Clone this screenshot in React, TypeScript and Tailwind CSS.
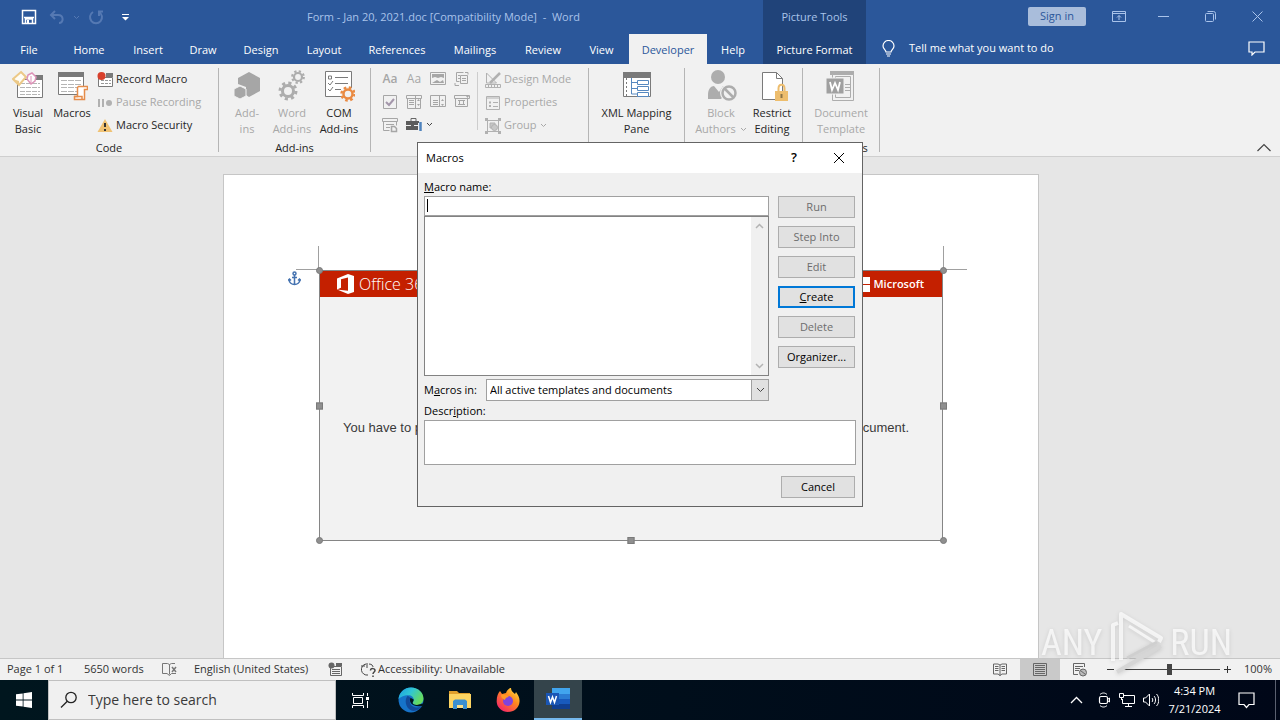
import { useState } from "react";
import type { ReactNode } from "react";

const tabs = [
  { name: "File", width: "w-[58px]" },
  { name: "Home", width: "w-[62px]" },
  { name: "Insert", width: "w-[56px]" },
  { name: "Draw", width: "w-[54px]" },
  { name: "Design", width: "w-[62px]" },
  { name: "Layout", width: "w-[64px]" },
  { name: "References", width: "w-[82px]" },
  { name: "Mailings", width: "w-[74px]" },
  { name: "Review", width: "w-[62px]" },
  { name: "View", width: "w-[55px]" },
  { name: "Developer", width: "w-[78px]" },
  { name: "Help", width: "w-[52px]" },
];

type IconProps = { children: ReactNode; size?: number; color?: string; className?: string };

const Icon = ({ children, size = 16, color = "currentColor", className = "" }: IconProps) => (
  <svg
    width={size}
    height={size}
    viewBox={`0 0 ${size} ${size}`}
    fill="none"
    stroke={color}
    className={`shrink-0 ${className}`}
    aria-hidden="true"
  >
    {children}
  </svg>
);

const Chevron = ({ className = "" }: { className?: string }) => (
  <svg width="7" height="5" viewBox="0 0 7 5" fill="none" stroke="currentColor" className={`inline-block ${className}`} aria-hidden="true">
    <path d="M1 1l2.500 2.500L6 1" />
  </svg>
);

/* ---------- ribbon icons ---------- */

const VisualBasicIcon = () => (
  <Icon size={32}>
    <path d="M5.500 9.500h25v18h-25z" fill="#fff" stroke="#7a7a7a" />
    <path d="M23 5h8v5h-8z" fill="#7a7a7a" stroke="none" />
    <path d="M8 13.500h20M8 17.500h20M8 21.500h20M8 24.500h20" stroke="#b5b5b5" strokeDasharray="5 1" />
    <path d="M9 2l5 5-7 8-6-6z" fill="#fffdf5" stroke="#ecc987" strokeWidth="2" />
    <path d="M1 9l6 2v4z" fill="#ecc987" stroke="none" />
    <path d="M16 5l4-2 4 4-1 4-4 3-4-5z" fill="#fff" stroke="#dd93b8" strokeWidth="1.500" />
    <path d="M19 6v7" stroke="#dd93b8" />
  </Icon>
);

const MacrosIcon = () => (
  <Icon size={32}>
    <path d="M2.500 3.500h25v21h-25z" fill="#fff" stroke="#7a7a7a" />
    <path d="M2 2h26v5H2z" fill="#7a7a7a" stroke="none" />
    <path d="M5 10.500h20M5 14.500h20M5 17.500h20M5 21.500h20" stroke="#b5b5b5" strokeDasharray="6 1" />
    <path d="M22.500 16.500h9v3h-3v10h-10v-3h3v-9z" fill="#fff" stroke="#e58c4a" strokeWidth="1.500" />
    <path d="M18 26.500h8v3" stroke="#e58c4a" strokeWidth="1.500" />
  </Icon>
);

const AddInsIcon = () => (
  <Icon size={32}>
    <path d="M18 2l11 6v13l-11 6-3-2v-8l-8-3V8z" fill="#a6a6a6" stroke="none" />
    <path d="M9 16l6 3v7l-6 3-6-3v-7z" fill="#a6a6a6" stroke="#f1f1f1" />
  </Icon>
);

const Gear = ({ cx, cy, r, color }: { cx: number; cy: number; r: number; color: string }) => (
  <g stroke={color} strokeWidth={r * 0.55}>
    <circle cx={cx} cy={cy} r={r} />
    <circle
      cx={cx}
      cy={cy}
      r={r * 1.45}
      strokeDasharray={`${r * 0.57} ${r * 0.57}`}
    />
  </g>
);

const WordAddInsIcon = () => (
  <Icon size={32}>
    <Gear cx={12} cy={21} r={5.500} color="#adadad" />
    <Gear cx={22} cy={7} r={4} color="#adadad" />
  </Icon>
);

const ComAddInsIcon = () => (
  <Icon size={32}>
    <path d="M2.500 1.500h26v25h-26z" fill="#fff" stroke="#7a7a7a" />
    <path d="M12 7.500h13M12 13.500h13M12 19.500h6" stroke="#7a7a7a" />
    <path d="M5.500 6h3v3h-3zM5 13l2 2 3-4M5 19l2 2 3-4" stroke="#7a7a7a" />
    <circle cx="25" cy="24" r="7" fill="#f1f1f1" stroke="none" />
    <Gear cx={25} cy={24} r={4.500} color="#ea8a42" />
  </Icon>
);

const XmlIcon = () => (
  <Icon size={32}>
    <path d="M2.500 3.500h27v23h-27z" fill="#fff" stroke="#7a7a7a" />
    <path d="M2 2h28v6H2z" fill="#7a7a7a" stroke="none" />
    <path d="M5.500 8v18" stroke="#7a7a7a" strokeDasharray="2 2" />
    <path d="M10.500 8v16h6M10.500 12.500h6M10.500 18.500h6" stroke="#5688bf" />
    <path d="M16.500 10.500h11v4h-11zM16.500 16.500h11v4h-11zM16.500 22.500h11v4h-11z" fill="#fff" stroke="#5688bf" />
  </Icon>
);

const BlockAuthorsIcon = () => (
  <Icon size={32}>
    <circle cx="13" cy="7" r="7" fill="#adadad" stroke="none" />
    <path d="M3 29v-4c0-6 3-9 6-9l5 6 4-6c3 0 5 2 6 4l-8 9z" fill="#adadad" stroke="none" />
    <circle cx="24" cy="23" r="9" fill="#f1f1f1" stroke="none" />
    <circle cx="24" cy="23" r="6.500" stroke="#adadad" strokeWidth="2.500" fill="#f1f1f1" />
    <path d="M19.500 18.500l9 9" stroke="#adadad" strokeWidth="2.500" />
  </Icon>
);

const RestrictIcon = () => (
  <Icon size={32}>
    <path d="M6.500 2.500h14l6 6v21h-20z" fill="#fff" stroke="#7a7a7a" />
    <path d="M20.500 2.500v6h6" stroke="#7a7a7a" />
    <path d="M22.500 22v-3.500c0-5 6-5 6 0V22" stroke="#edbd6d" strokeWidth="2" />
    <path d="M19 21h13v10H19z" fill="#edbd6d" stroke="none" />
    <path d="M25.500 24v4" stroke="#8a7347" strokeWidth="2" />
  </Icon>
);

const TemplateIcon = () => (
  <Icon size={32}>
    <path d="M5 1h24v4H5z" fill="#adadad" stroke="none" />
    <path d="M7.500 4.500h21v26h-21z" fill="#f1f1f1" stroke="#adadad" />
    <path d="M10.500 6.500h15v21h-15z" stroke="#adadad" />
    <path d="M20 14.500h5M20 17.500h5M20 20.500h5" stroke="#adadad" />
    <path d="M1 8h18v16H1z" fill="#a0a0a0" stroke="#f1f1f1" />
    <path d="M5 12l2 8 3-7 3 7 2-8" stroke="#fff" strokeWidth="1.800" />
  </Icon>
);

const RecordIcon = () => (
  <Icon>
    <path d="M1.500 5.500h14v9h-14z" fill="#fff" stroke="#7a7a7a" />
    <path d="M9 1h7v4H9z" fill="#7a7a7a" stroke="none" />
    <path d="M4 8.500h10M4 11.500h10" stroke="#999" strokeDasharray="3 1" />
    <circle cx="4.500" cy="4" r="4" fill="#d8402c" stroke="none" />
  </Icon>
);

const PauseIcon = () => (
  <Icon>
    <path d="M2 4v8M6 4v8" stroke="#b1b1b1" strokeWidth="2" />
    <circle cx="12" cy="8" r="3" fill="#b1b1b1" stroke="none" />
  </Icon>
);

const WarningIcon = () => (
  <Icon>
    <path d="M8 1l7.500 13H.5z" fill="#f0c274" stroke="none" />
    <path d="M8 5v4M8 11v2" stroke="#333" strokeWidth="2" />
  </Icon>
);

const DesignModeIcon = () => (
  <Icon color="#b1b1b1">
    <path d="M1.500 1v10h10z" />
    <path d="M5 11L15 1" strokeWidth="2.500" />
    <path d="M.5 12.500h15v3H.5zM3.500 13v2M6.500 13v2M9.500 13v2M12.500 13v2" />
  </Icon>
);

const PropertiesIcon = () => (
  <Icon color="#b1b1b1">
    <path d="M1.500 1.500h13v13h-13zM1 3h14" />
    <path d="M4 7.500h2M4 11h2" strokeWidth="2" />
    <path d="M8 7.500h5M8 11.500h5" />
  </Icon>
);

const GroupIcon = () => (
  <Icon color="#b1b1b1">
    <path d="M2.500 2.500h11v11h-11z" />
    <path d="M5 5h5v5H5z" fill="#c8c8c8" />
    <circle cx="9.500" cy="9.500" r="3" fill="#c8c8c8" />
    <path d="M0 1.500h3M13 1.500h3M0 14.500h3M13 14.500h3" strokeWidth="3" />
  </Icon>
);

const PictureControl = () => (
  <Icon>
    <path d="M.5 1.500h15v12H.5z" />
    <path d="M2 3h12v4l-3-1-3 1-3-1-3 1zM2 12l5-3 3 2 3-2 1 3z" fill="currentColor" stroke="none" />
  </Icon>
);

const BuildingBlockControl = () => (
  <Icon>
    <path d="M2.500 1.500h7M2.500 1.500v9h3M4 4.500h2M4 7.500h2M6.500 4.500h7v8h-7zM8 7.500h4M8 9.500h4M11 1.500h3v2M1 12v2.500h4" />
  </Icon>
);

const CheckControl = () => (
  <Icon>
    <path d="M1.500 1.500h13v13h-13z" />
    <path d="M4 8l3 3 5-6" stroke="#a497ab" strokeWidth="2" />
  </Icon>
);

const ComboControl = ({ plain = false }: { plain?: boolean }) => (
  <Icon>
    <path d={plain ? "M.5 1.500h15v11H.5zM9.500 1v12" : "M.5 1.500h15v3H.5zM1.500 4.500h13v10h-13zM9.500 1v14"} />
    <path d="M3 6.500h5M3 8.500h5M3 10.500h5" />
    <path d="M11 7l1.500-2L14 7zM11 10l1.500 2 1.500-2z" fill="currentColor" stroke="none" />
  </Icon>
);

const DateControl = () => (
  <Icon>
    <path d="M.5 1.500h15v3H.5zM1.500 4.500h12v8h-12zM4 6.500h7M4 10.500h7M5.500 6v5M9.500 6v5" />
    <path d="M12 2l1.500 2L15 2z" fill="currentColor" stroke="none" />
  </Icon>
);

const RepeatControl = () => (
  <Icon>
    <path d="M.5 1.500h15v3H.5zM1.500 4.500v9h6M14.500 4.500v4M4 7.500h8M4 10.500h4" />
    <path d="M9.500 9.500h3l2 2v3h-5z" fill="#f1f1f1" strokeWidth="1.500" />
  </Icon>
);

const ToolboxIcon = () => (
  <Icon>
    <path d="M5 4V1.500h5V4" stroke="#666" />
    <path d="M0 4h13v9H0z" fill="#5c5c5c" stroke="none" />
    <path d="M0 8.500h5M8 8.500h4" stroke="#f1f1f1" />
    <path d="M14.500 5v9" stroke="#4f83bd" strokeWidth="2.500" />
    <path d="M12.500 6v8" stroke="#f1f1f1" />
  </Icon>
);

/* ---------- ribbon pieces ---------- */

type BigButtonProps = { icon: ReactNode; lines: string[]; width: string; disabled?: boolean; menu?: boolean };

const BigButton = ({ icon, lines, width, disabled = false, menu = false }: BigButtonProps) => (
  <button
    disabled={disabled}
    className={`flex shrink-0 flex-col items-center pt-1.5 whitespace-nowrap ${width} ${disabled ? "text-[#a8a8a8]" : "text-[#262626]"}`}
  >
    {icon}
    <span className="mt-[3px] h-8 leading-4">
      {lines.map((line, i) => (
        <span key={line} className="block">
          {line}
          {menu && i === lines.length - 1 && <Chevron className="mb-0.5 ml-1" />}
        </span>
      ))}
    </span>
  </button>
);

const SmallButton = ({ icon, text, disabled = false, menu = false }: { icon: ReactNode; text: string; disabled?: boolean; menu?: boolean }) => (
  <button
    disabled={disabled}
    className={`flex h-[23px] items-center gap-[3px] whitespace-nowrap ${disabled ? "text-[#a8a8a8]" : "text-[#262626]"}`}
  >
    {icon}
    {text}
    {menu && <Chevron />}
  </button>
);

const RibbonGroup = ({ label, width, children }: { label?: string; width: string; children: ReactNode }) => (
  <section className={`flex shrink-0 ${width}`}>
    <div className="flex min-w-0 flex-1 flex-col">
      <div className="flex h-[76px]">{children}</div>
      <div className="h-4 text-center leading-4">{label}</div>
    </div>
    <div className="my-1 w-px bg-[#b5b5b5]" />
  </section>
);

const Ribbon = () => (
  <div className="flex h-[93px] shrink-0 border-b border-[#cfcfcf] bg-[#f1f1f1] text-[#262626]">
    <RibbonGroup label="Code" width="w-[219px]">
      <div className="flex pl-1.5">
        <BigButton icon={<VisualBasicIcon />} lines={["Visual", "Basic"]} width="w-11" />
        <BigButton icon={<MacrosIcon />} lines={["Macros"]} width="w-11" />
        <div className="flex flex-col pt-1 pl-[3px]">
          <SmallButton icon={<RecordIcon />} text="Record Macro" />
          <SmallButton icon={<PauseIcon />} text="Pause Recording" disabled />
          <SmallButton icon={<WarningIcon />} text="Macro Security" />
        </div>
      </div>
    </RibbonGroup>
    <RibbonGroup label="Add-ins" width="w-[152px]">
      <div className="flex pl-[7px]">
        <BigButton icon={<AddInsIcon />} lines={["Add-", "ins"]} width="w-[42px]" disabled />
        <BigButton icon={<WordAddInsIcon />} lines={["Word", "Add-ins"]} width="w-12" disabled />
        <BigButton icon={<ComAddInsIcon />} lines={["COM", "Add-ins"]} width="w-[46px]" />
      </div>
    </RibbonGroup>
    <RibbonGroup width="w-[218px]">
      <div className="grid w-[103px] grid-cols-[24px_24px_24px_24px] grid-rows-[23px_23px_23px] pt-[3px] pl-[7px] text-[#a6a6a6]">
        <button className="text-xs font-semibold">Aa</button>
        <button className="text-xs">Aa</button>
        <button className="flex items-center justify-center" aria-label="Picture control"><PictureControl /></button>
        <button className="flex items-center justify-center" aria-label="Building block"><BuildingBlockControl /></button>
        <button className="flex items-center justify-center" aria-label="Check box"><CheckControl /></button>
        <button className="flex items-center justify-center" aria-label="Combo box"><ComboControl /></button>
        <button className="flex items-center justify-center" aria-label="Drop-down list"><ComboControl plain /></button>
        <button className="flex items-center justify-center" aria-label="Date picker"><DateControl /></button>
        <button className="flex items-center justify-center" aria-label="Repeating section"><RepeatControl /></button>
        <button className="col-span-2 flex items-center gap-1 pl-1 text-[#444]" aria-label="Legacy tools">
          <ToolboxIcon />
          <Chevron />
        </button>
      </div>
      <div className="mt-2 ml-[3px] h-[58px] w-px bg-[#cdcdcd]" />
      <div className="flex flex-col pt-1 pl-[7px]">
        <SmallButton icon={<DesignModeIcon />} text="Design Mode" disabled />
        <SmallButton icon={<PropertiesIcon />} text="Properties" disabled />
        <SmallButton icon={<GroupIcon />} text="Group" disabled menu />
      </div>
    </RibbonGroup>
    <RibbonGroup width="w-24">
      <BigButton icon={<XmlIcon />} lines={["XML Mapping", "Pane"]} width="w-full" />
    </RibbonGroup>
    <RibbonGroup width="w-[118px]">
      <div className="flex pl-[9px]">
        <BigButton icon={<BlockAuthorsIcon />} lines={["Block", "Authors"]} width="w-[54px]" disabled menu />
        <BigButton icon={<RestrictIcon />} lines={["Restrict", "Editing"]} width="w-12" />
      </div>
    </RibbonGroup>
    <RibbonGroup label="Templates" width="w-[77px]">
      <BigButton icon={<TemplateIcon />} lines={["Document", "Template"]} width="w-full" disabled />
    </RibbonGroup>
    <button className="mt-auto mr-2 mb-1 ml-auto" aria-label="Collapse the ribbon">
      <svg width="16" height="9" viewBox="0 0 16 9" fill="none" stroke="#444" strokeWidth="1.200">
        <path d="M1.500 8L8 1.500 14.500 8" />
      </svg>
    </button>
  </div>
);

/* ---------- window header ---------- */

const TitleBar = () => (
  <header className="flex h-16 shrink-0 bg-[#2b579a] text-white">
    <div className="flex w-[763px] shrink-0 flex-col">
      <div className="flex h-[34px] items-center">
        <div className="flex w-[307px] items-center pl-[21px]">
          <button aria-label="Save">
            <Icon>
              <path d="M1.500 1.500h13v13h-13z" strokeWidth="1.500" />
              <path d="M3 8.500h10M4.500 14v-4h7v4" strokeWidth="1.500" />
              <path d="M6 11h2v3H6z" fill="#fff" stroke="none" />
            </Icon>
          </button>
          <button className="ml-3 flex items-center gap-2 text-[#5579b3]" aria-label="Undo">
            <Icon>
              <path d="M6 2L2 6l4 4M2 6h7c6 0 6 8 1 8" strokeWidth="2" />
            </Icon>
            <Chevron />
          </button>
          <button className="ml-2 text-[#5579b3]" aria-label="Repeat">
            <Icon>
              <path d="M11 3a6 6 0 1 1-6 0M11 7V2.500h4" strokeWidth="2" />
            </Icon>
          </button>
          <button className="ml-[18px]" aria-label="Customize toolbar">
            <svg width="7" height="7" viewBox="0 0 7 7" fill="#fff"><path d="M0 0h7v1H0zM0 3h7L3.500 6.500z" /></svg>
          </button>
        </div>
        <h1 className="whitespace-pre text-[#a9c3ea]">Form - Jan 20, 2021.doc [Compatibility Mode]  -  Word</h1>
      </div>
      <nav className="flex h-[30px]">
        {tabs.map((tab) => (
          <button
            key={tab.name}
            className={`shrink-0 pt-0.5 ${tab.width} ${tab.name === "Developer" ? "bg-[#f1f1f1] text-[#2b579a]" : ""}`}
          >
            {tab.name}
          </button>
        ))}
      </nav>
    </div>
    <div className="flex w-[103px] shrink-0 flex-col bg-[#204379]">
      <div className="flex h-[34px] items-center justify-center text-[#a9c3ea]">Picture Tools</div>
      <button className="h-[30px] pt-0.5">Picture Format</button>
    </div>
    <div className="flex min-w-0 flex-1 flex-col">
      <div className="flex h-8 items-center justify-end pr-[17px] text-[#a9c3ea]">
        <button className="mr-[26px] h-[19px] w-[58px] rounded-xs bg-[#a9bddb] text-[#2b579a]">Sign in</button>
        <button className="mr-8" aria-label="Ribbon display options">
          <svg width="14" height="11" viewBox="0 0 14 11" fill="none" stroke="currentColor">
            <path d="M.5.5h13v10H.5zM1 2.500h12M7 9V4.500M5 6.500l2-2 2 2" />
          </svg>
        </button>
        <button className="mr-9" aria-label="Minimize">
          <svg width="11" height="11" viewBox="0 0 11 11" fill="none" stroke="currentColor"><path d="M0 5.500h11" /></svg>
        </button>
        <button className="mr-9" aria-label="Restore">
          <svg width="11" height="11" viewBox="0 0 11 11" fill="none" stroke="currentColor">
            <rect x=".5" y="2.500" width="8" height="8" rx="1" />
            <path d="M2.500.5h6a2 2 0 0 1 2 2v6" />
          </svg>
        </button>
        <button aria-label="Close">
          <svg width="11" height="11" viewBox="0 0 11 11" fill="none" stroke="currentColor"><path d="M.5.5l10 10M10.500.5l-10 10" /></svg>
        </button>
      </div>
      <div className="flex h-8 items-center pr-[15px] pl-4">
        <button className="flex items-center gap-3.5">
          <svg width="13" height="17" viewBox="0 0 13 17" fill="none" stroke="#fff" strokeWidth="1.200">
            <path d="M4 12c0-2-3-3-3-6a5.500 5.500 0 0 1 11 0c0 3-3 4-3 6zM4 14h5M5 16h3" />
          </svg>
          Tell me what you want to do
        </button>
        <button className="ml-auto" aria-label="Comments">
          <svg width="17" height="15" viewBox="0 0 17 15" fill="none" stroke="#fff" strokeWidth="1.200">
            <path d="M1 1h15v10H7l-3 3v-3H1z" />
          </svg>
        </button>
      </div>
    </div>
  </header>
);

/* ---------- document ---------- */

const handles = [
  "-left-1 -top-1 rounded-full",
  "-right-[5px] -top-1 rounded-full",
  "-left-1 top-1/2 -translate-y-1/2",
  "-right-[5px] top-1/2 -translate-y-1/2",
  "-bottom-1 -left-1 rounded-full",
  "-bottom-1 left-1/2 -translate-x-1/2",
  "-bottom-1 -right-[5px] rounded-full",
];

const DocumentArea = () => (
  <main className="flex min-h-0 flex-1 justify-center overflow-hidden bg-[#e6e6e6] pt-[17px] pr-[18px]">
    <div className="w-[816px] shrink-0 border border-b-0 border-[#c6c6c6] bg-white px-[95px] pt-[95px]">
      <div className="relative flex h-[271px] flex-col border border-[#858585] bg-[#f2f2f2]">
        <svg width="13" height="15" viewBox="0 0 13 15" fill="none" stroke="#4472b0" strokeWidth="1.500" className="absolute top-0 -left-8">
          <circle cx="6.500" cy="2.500" r="1.500" />
          <path d="M6.500 4v10M4 6.500h5M1 8c0 4 3 5.500 5.500 5.500S12 12 12 8M0 9.500L1.500 8 3 9.500M10 9.500L11.500 8 13 9.500" />
        </svg>
        <div className="absolute -top-[25px] -left-0.5 h-6 w-px bg-[#a0a0a0]" />
        <div className="absolute -top-0.5 -left-6 h-px w-6 bg-[#a0a0a0]" />
        <div className="absolute -top-[25px] -right-0.5 h-6 w-px bg-[#a0a0a0]" />
        <div className="absolute -top-0.5 -right-[25px] h-px w-6 bg-[#a0a0a0]" />
        <div className="flex h-[26px] items-center justify-between bg-[#c42000] pr-[18px] pl-[17px] text-white">
          <div className="flex items-center gap-1">
            <svg width="18" height="20" viewBox="0 0 18 20" fill="#fff" aria-hidden="true">
              <path d="M0 4.500L11 0l6 2v16l-6 2L0 15.500l11 1.300V3.500L4 5.200v8.600L0 15.500z" />
            </svg>
            <span className="text-base font-light">Office 365</span>
          </div>
          <div className="flex items-center gap-[3px]">
            <svg width="15" height="15" viewBox="0 0 15 15" fill="#fff" aria-hidden="true">
              <path d="M0 0h7v7H0zM8 0h7v7H8zM0 8h7v7H0zM8 8h7v7H8z" />
            </svg>
            <span className="font-semibold">Microsoft</span>
          </div>
        </div>
        <div className="mt-[122px] flex justify-between pr-[33px] pl-[23px] font-['Liberation_Sans',sans-serif] text-[13px] leading-[18px] text-[#3a3a3a]">
          <span>You have to p</span>
          <span>cument.</span>
        </div>
        {handles.map((place) => (
          <span key={place} className={`absolute size-[7px] border border-[#7a7a7a] bg-[#8f8f8f] ${place}`} />
        ))}
      </div>
    </div>
  </main>
);

/* ---------- macros dialog ---------- */

const DialogButton = ({ children, disabled = false, primary = false, width = "w-[77px]" }: { children: ReactNode; disabled?: boolean; primary?: boolean; width?: string }) => (
  <button
    disabled={disabled}
    className={`h-[22px] ${width} bg-[#e1e1e1] ${primary ? "border-2 border-[#0078d7]" : "border border-[#adadad]"} ${disabled ? "text-[#6d6d6d]" : "text-black"}`}
  >
    {children}
  </button>
);

const MacrosDialog = () => {
  const [macroName, setMacroName] = useState("");

  return (
    <div role="dialog" aria-label="Macros" className="absolute inset-x-0 top-[142px] mx-auto w-[446px] border border-[#646464] bg-[#f0f0f0] text-black">
      <div className="flex h-[30px] items-center bg-white pr-[17px] pl-2">
        <span>Macros</span>
        <button className="ml-auto text-[13px] font-semibold" aria-label="Help">?</button>
        <button className="ml-9" aria-label="Close dialog">
          <svg width="12" height="12" viewBox="0 0 12 12" fill="none" stroke="#000"><path d="M1 1l10 10M11 1L1 11" /></svg>
        </button>
      </div>
      <div className="px-1.5 pt-1.5 pb-2">
        <div className="flex justify-between pr-px">
          <div className="w-[345px]">
            <label htmlFor="macro-name" className="block h-[17px] leading-4">
              <span className="underline">M</span>acro name:
            </label>
            <div className="relative">
              <input
                id="macro-name"
                value={macroName}
                onChange={(e) => setMacroName(e.target.value)}
                className="block h-5 w-full border border-[#a0a0a0] bg-white px-1 outline-none"
              />
              {macroName === "" && <span className="absolute top-[3px] left-[3px] h-[13px] w-px bg-black" />}
            </div>
            <div className="flex h-40 justify-end border border-[#828282] bg-white" role="listbox" aria-label="Macro list">
              <div className="flex w-[17px] flex-col items-center justify-between bg-[#f0f0f0] py-1.5 text-[#b3b3b3]">
                <svg width="9" height="6" viewBox="0 0 9 6" fill="none" stroke="currentColor" strokeWidth="1.500"><path d="M1 5l3.500-3.500L8 5" /></svg>
                <svg width="9" height="6" viewBox="0 0 9 6" fill="none" stroke="currentColor" strokeWidth="1.500"><path d="M1 1l3.500 3.500L8 1" /></svg>
              </div>
            </div>
          </div>
          <div className="flex flex-col gap-2 pt-[17px]">
            <DialogButton disabled>Run</DialogButton>
            <DialogButton disabled>Step Into</DialogButton>
            <DialogButton disabled>Edit</DialogButton>
            <DialogButton primary><span className="underline">C</span>reate</DialogButton>
            <DialogButton disabled>Delete</DialogButton>
            <DialogButton>Or<span className="underline">g</span>anizer...</DialogButton>
          </div>
        </div>
        <div className="mt-[3px] flex w-[345px] items-center">
          <label htmlFor="macros-in" className="w-[62px] shrink-0">M<span className="underline">a</span>cros in:</label>
          <div className="relative flex-1">
            <select id="macros-in" className="block h-[22px] w-full appearance-none border border-[#a0a0a0] bg-white pl-[3px] outline-none">
              <option>All active templates and documents</option>
            </select>
            <span className="pointer-events-none absolute inset-y-0 right-0 flex w-[18px] items-center justify-center border border-[#a0a0a0] bg-[#e1e1e1]">
              <svg width="9" height="6" viewBox="0 0 9 6" fill="none" stroke="#444"><path d="M1 1l3.500 3.500L8 1" /></svg>
            </span>
          </div>
        </div>
        <label htmlFor="description" className="mt-0.5 block h-[17px] leading-4">Descr<span className="underline">i</span>ption:</label>
        <textarea id="description" className="block h-[45px] w-full resize-none border border-[#a0a0a0] bg-white px-1 outline-none" />
        <div className="mt-[11px] flex justify-end pr-px">
          <DialogButton width="w-[74px]">Cancel</DialogButton>
        </div>
      </div>
    </div>
  );
};

/* ---------- bottom bars ---------- */

const StatusBar = () => (
  <footer className="flex h-[22px] shrink-0 items-center border-t border-[#c6c6c6] bg-[#f1f1f1] pr-2 pl-[7px] whitespace-nowrap text-[#333]">
    <span className="w-[77px]">Page 1 of 1</span>
    <span className="w-[78px]">5650 words</span>
    <span className="w-8">
      <Icon color="#777">
        <path d="M7.500 2.500v10M7.500 2.500L5.500 1.500h-5v10H5l2.500 2 2-2H14M7.500 2.500l2-1H13" />
        <path d="M10 5l4 5M14 5l-4 5" strokeWidth="1.500" />
      </Icon>
    </span>
    <span className="w-[134px]">English (United States)</span>
    <span className="w-8">
      <Icon color="#666">
        <path d="M2.500 4.500h11v9h-11zM4 7.500h8M4 9.500h8M4 11.500h8" />
        <path d="M8 1h6v3H8z" fill="#666" stroke="none" />
        <circle cx="3.500" cy="3.500" r="3" fill="#666" stroke="none" />
      </Icon>
    </span>
    <span className="flex items-center gap-0.5">
      <Icon color="#444">
        <path d="M6 2a5.500 5.500 0 0 0 2 11M1 4h4M7 1v5M9 2c3 0 4 2 4 3" />
        <path d="M10.500 8.500c0-3 4.500-2 4.500 0 0 1.500-2 1.500-2 3.500M13 13.500V15" strokeWidth="1.500" />
      </Icon>
      Accessibility: Unavailable
    </span>
    <div className="ml-auto flex h-full items-center">
      <button className="flex h-full w-10 items-center justify-center" aria-label="Read mode">
        <Icon color="#666">
          <path d="M8 3v11M8 3L6 2H1.500v10H6l2 1.500 2-1.500h4.500V2H10zM3 4.500h3.500M3 6.500h3.500M3 8.500h3.500M9.500 4.500H13M9.500 6.500H13M9.500 8.500H13" />
        </Icon>
      </button>
      <button className="flex h-full w-10 items-center justify-center bg-[#c9c9c9]" aria-label="Print layout">
        <Icon color="#666">
          <path d="M1.500 1.500h13v12h-13zM3 3.500h10M3 5.500h10M3 7.500h10M3 9.500h10M3 11.500h10" />
        </Icon>
      </button>
      <button className="flex h-full w-10 items-center justify-center" aria-label="Web layout">
        <Icon color="#666">
          <path d="M6 12.500H1.500v-11h11V5M3 4.500h8M3 6.500h5M3 8.500h4" />
          <circle cx="11" cy="10.500" r="3.500" fill="#bbb" />
          <path d="M8.500 8.500l5 4" />
        </Icon>
      </button>
      <button className="ml-1.5 w-2.5" aria-label="Zoom out">
        <svg width="9" height="9" viewBox="0 0 9 9" stroke="#333"><path d="M1 4.500h7" /></svg>
      </button>
      <input
        type="range"
        aria-label="Zoom"
        min={0}
        max={100}
        defaultValue={50}
        className="mx-[3px] h-[11px] w-[101px] appearance-none bg-[linear-gradient(#444,#444)] bg-[length:100%_1px] bg-center bg-no-repeat [&::-webkit-slider-thumb]:h-[11px] [&::-webkit-slider-thumb]:w-[5px] [&::-webkit-slider-thumb]:appearance-none [&::-webkit-slider-thumb]:bg-[#444]"
      />
      <button aria-label="Zoom in">
        <svg width="9" height="9" viewBox="0 0 9 9" stroke="#333"><path d="M1 4.500h7M4.500 1v7" /></svg>
      </button>
      <span className="ml-3">100%</span>
    </div>
  </footer>
);

const EdgeIcon = () => (
  <svg width="26" height="26" viewBox="0 0 24 24" aria-hidden="true">
    <defs>
      <linearGradient id="edgeTop" x1="0" y1="0" x2="1" y2="0.500">
        <stop offset="0" stopColor="#1b9de2" />
        <stop offset="0.500" stopColor="#30c6d4" />
        <stop offset="1" stopColor="#67db5d" />
      </linearGradient>
    </defs>
    <circle cx="12" cy="12" r="11.500" fill="#1673c9" />
    <path d="M.5 11C1 5 6 .5 12 .5c7 0 11.500 5 11.500 10 0 4-3 6-6 6s-4-1-4-2c0-.8 1-1 1-3 0-2-2-4-5-4-4 0-8 2-9 3.500z" fill="url(#edgeTop)" />
    <path d="M9 8c-3 3-3 11 4 14 4 .5 7-1.500 9-4-8 3-13-2-10.500-8z" fill="#124a99" />
    <path d="M11.500 10c-2 5 3 9 10.500 7.500l1 2.500 1-5-6.500 1.500c-3 0-4-1-4-2 0-.8 1-1 1-3z" fill="#00161e" />
  </svg>
);

const FolderIcon = () => (
  <svg width="24" height="22" viewBox="0 0 24 22" aria-hidden="true">
    <path d="M1 2h8l2 2h11v6H1z" fill="#e0a02c" />
    <path d="M1 5h22v14H1z" fill="#fcd462" />
    <path d="M5 20v-8l2-1.500h10l2 1.500v8h-4v-4H9v4z" fill="#3a8fd0" />
    <path d="M9 16h6v3H9z" fill="#fbe089" />
  </svg>
);

const FirefoxIcon = () => (
  <svg width="24" height="26" viewBox="0 0 24 26" aria-hidden="true">
    <defs>
      <linearGradient id="fox" x1="1" y1="0" x2="0.200" y2="1">
        <stop offset="0" stopColor="#fff04a" />
        <stop offset="0.450" stopColor="#ff8a1e" />
        <stop offset="1" stopColor="#f5206c" />
      </linearGradient>
    </defs>
    <path d="M4 4l2 3 4-1c1-3 3-5 5-5 0 3 2 4 4 6l1-2c2 3 4 6 3.500 10C23 21 18 25 12 25S1 20.500 .7 15C.5 10 2 6 4 4z" fill="url(#fox)" />
    <circle cx="12" cy="14" r="5" fill="#8143dd" />
    <path d="M5 8c3-1 6 0 8 2-2 0-4 1-4 3-2-1-4-2-4-5z" fill="#ff9a26" />
  </svg>
);

const WordIcon = () => (
  <svg width="24" height="22" viewBox="0 0 24 22" aria-hidden="true">
    <path d="M6 0h18v6H6z" fill="#41a5ee" />
    <path d="M6 6h18v5H6z" fill="#2b7cd3" />
    <path d="M6 11h18v5H6z" fill="#185abd" />
    <path d="M6 16h18v5H6z" fill="#103f91" />
    <path d="M0 5h13v12H0z" fill="#1a56b5" />
    <path d="M2.500 8l2 6.500 2-5.500 2 5.500 2-6.500" fill="none" stroke="#fff" strokeWidth="1.500" />
  </svg>
);

const Taskbar = () => (
  <footer className="flex h-10 shrink-0 items-center bg-linear-to-r from-[#00161e] to-[#000718] text-white">
    <button className="flex h-full w-12 items-center justify-center" aria-label="Start">
      <svg width="16" height="16" viewBox="0 0 16 16" fill="#fff">
        <path d="M0 2.300L6.700 1.400v6.200H0zM7.500 1.300L16 0v7.600H7.500zM0 8.400h6.700v6.200L0 13.700zM7.500 8.400H16V16l-8.500-1.300z" />
      </svg>
    </button>
    <label className="flex h-full w-72 items-center gap-2.5 border border-[#c0c0c0] bg-[#f0f0f0] pl-[11px]">
      <svg width="18" height="18" viewBox="0 0 18 18" fill="none" stroke="#222" strokeWidth="1.300" className="shrink-0">
        <circle cx="11" cy="6.500" r="5.200" />
        <path d="M7.300 10.200L1 16.500" />
      </svg>
      <input type="text" placeholder="Type here to search" className="w-full bg-transparent text-sm outline-none placeholder:text-[#3a3a3a]" />
    </label>
    <button className="flex h-full w-12 items-center justify-center" aria-label="Task view">
      <svg width="17" height="17" viewBox="0 0 17 17" fill="none" stroke="#fff">
        <path d="M.5 1v2.500h11V1M.5 16v-2.500h11V16M1.500 5.500h9v6h-9zM15.500 1v3M15.500 9v7" />
        <path d="M14 5h3v3h-3z" fill="#fff" stroke="none" />
      </svg>
    </button>
    <button className="flex h-full w-[54px] items-center justify-center" aria-label="Edge"><EdgeIcon /></button>
    <button className="flex h-full w-11 items-center justify-center" aria-label="File Explorer"><FolderIcon /></button>
    <button className="flex h-full w-[52px] items-center justify-center" aria-label="Firefox"><FirefoxIcon /></button>
    <button className="flex h-full w-12 items-center justify-center border-b-2 border-[#76b9ed] bg-[#34444b]" aria-label="Word"><WordIcon /></button>
    <div className="ml-auto flex h-full items-center">
      <button className="mr-3.5" aria-label="Show hidden icons">
        <svg width="13" height="8" viewBox="0 0 13 8" fill="none" stroke="#fff" strokeWidth="1.300"><path d="M1 7l5.500-5.500L12 7" /></svg>
      </button>
      <button className="mr-1.5" aria-label="Meet now">
        <Icon>
          <rect x="2.500" y="4.500" width="8" height="7" rx="1.500" strokeWidth="1.200" />
          <path d="M10.500 7.500l2-1.500v4l-2-1.500M3 2.500c2-2 5-2 7 0M3 13.500c2 2 5 2 7 0" />
        </Icon>
      </button>
      <button className="mr-2" aria-label="Network">
        <Icon>
          <path d="M5 3.500h10.500v8H3.500V7M9.500 12v2.500M6 14.500h7M.5 1.500h4v4h-4zM2.500 5.500V8" />
        </Icon>
      </button>
      <button className="mr-[9px]" aria-label="Volume">
        <Icon>
          <path d="M.5 6v4h2l4 4V2l-4 4zM9 6c1 1 1 3 0 4M11 4c2 2 2 6 0 8M13.500 2c3 3 3 9 0 12" />
        </Icon>
      </button>
      <div className="w-[53px] text-center leading-[18px] whitespace-nowrap">
        <div>4:34 PM</div>
        <div>7/21/2024</div>
      </div>
      <button className="mr-5 ml-[17px]" aria-label="Notifications">
        <svg width="17" height="17" viewBox="0 0 17 17" fill="none" stroke="#fff" strokeWidth="1.200">
          <path d="M1 1h15v11.500h-5L8.500 15.500 6 12.500H1z" />
        </svg>
      </button>
      <div className="mr-1 h-full w-px bg-[#5a6070]" />
    </div>
  </footer>
);

const Watermark = () => (
  <div className="pointer-events-none absolute right-12 bottom-11 flex items-center gap-1.5 font-['Liberation_Sans_Narrow','Roboto_Condensed',Roboto,sans-serif] text-4xl text-white/70 drop-shadow-sm">
    <span>ANY</span>
    <svg width="56" height="66" viewBox="0 0 56 66" fill="none" stroke="currentColor" strokeWidth="4" strokeLinejoin="round" aria-hidden="true">
      <path d="M10 13L5 15v36" />
      <path d="M13 50V4l40 24-2 4" />
      <path d="M21 16l27 17" strokeWidth="3" />
      <path d="M19 48l30-16" stroke="#cfcfcf" strokeWidth="3" />
      <path d="M9 62L53 36" stroke="#d6d6d6" />
    </svg>
    <span>RUN</span>
  </div>
);

export default function App() {
  return (
    <div className="relative flex h-screen flex-col overflow-hidden font-['Open_Sans','Noto_Sans',sans-serif] text-[11px]">
      <TitleBar />
      <Ribbon />
      <DocumentArea />
      <StatusBar />
      <Taskbar />
      <MacrosDialog />
      <Watermark />
    </div>
  );
}
